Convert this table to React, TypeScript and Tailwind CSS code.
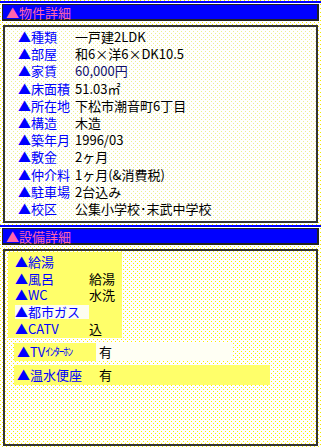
import React from "react";

const font = { fontFamily: '"Noto Sans CJK JP", "Noto Sans", sans-serif' };

// dotted paper backgrounds
const pageDots =
  "bg-white bg-[radial-gradient(circle_at_0.5px_0.5px,#f5e800_0.6px,transparent_0.75px),radial-gradient(circle_at_2.5px_2.5px,#f5e800_0.6px,transparent_0.75px)] bg-[length:4px_4px]";
const faintDots =
  "bg-white bg-[radial-gradient(circle_at_0.5px_0.5px,#eeee90_0.6px,transparent_0.75px),radial-gradient(circle_at_2.5px_2.5px,#eeee90_0.6px,transparent_0.75px)] bg-[length:4px_4px]";
const yellowDots =
  "bg-white bg-[radial-gradient(circle_at_0.5px_0.5px,#ffee00_0.6px,transparent_0.75px),radial-gradient(circle_at_2.5px_2.5px,#ffee00_0.6px,transparent_0.75px)] bg-[length:4px_4px]";
const highlight = "bg-[#ffff6a]";

function Header({ title }: { title: string }) {
  return (
    <div className="mx-[2px] h-[17px] bg-[#0000ff] border border-[#222] border-r-2 border-b-2 flex items-center pl-[3px]">
      <span className="text-[13px] leading-none text-[#ff66aa]">▲{title}</span>
    </div>
  );
}

const details: [string, string, string?][] = [
  ["種類", "一戸建2LDK"],
  ["部屋", "和6×洋6×DK10.5"],
  ["家賃", "60,000円", "#101070"],
  ["床面積", "51.03㎡"],
  ["所在地", "下松市潮音町6丁目"],
  ["構造", "木造"],
  ["築年月", "1996/03"],
  ["敷金", "2ヶ月"],
  ["仲介料", "1ヶ月(&消費税)"],
  ["駐車場", "2台込み"],
  ["校区", "公集小学校･末武中学校"],
];

const equip: [string, string, boolean?][] = [
  ["給湯", ""],
  ["風呂", "給湯"],
  ["WC", "水洗"],
  ["都市ガス", "", true],
  ["CATV", "込"],
];

export default function App() {
  return (
    <div className={`w-[321px] h-[448px] overflow-hidden ${pageDots}`} style={font}>
      <div className="h-[2px] bg-[#0000ff] mt-[1px]" />
      <div className="pt-[1px]">
        <Header title="物件詳細" />
      </div>
      <div className={`mx-[3px] mt-[4px] h-[198px] border-2 border-[#333] ${faintDots} pl-[13px] pt-[1px]`}>
        {details.map(([k, v, c]) => (
          <div key={k} className="flex items-center h-[17.2px] text-[13px] leading-none">
            <span className="w-[57px] shrink-0 text-[#0000ff] whitespace-nowrap">▲{k}</span>
            <span className="whitespace-nowrap" style={{ color: c ?? "#000" }}>
              {v}
            </span>
          </div>
        ))}
      </div>
      <div className="h-[2px] bg-[#0000ff] mt-[2px]" />
      <div className="pt-[1px]">
        <Header title="設備詳細" />
      </div>
      <div className={`mx-[3px] mt-[4px] h-[197px] border-2 border-[#333] ${yellowDots} pl-[3px] pt-[1px]`}>
        <div className={`w-[114px] ${highlight} pt-[2px] pb-[1px]`}>
          {equip.map(([k, v, light]) => (
            <div key={k} className="flex items-center h-[16.6px] text-[13px] leading-[14px]">
              <span
                className={`ml-[7px] w-[74px] shrink-0 text-[#0000ff] whitespace-nowrap ${light ? "bg-[#fdfdf0]" : ""}`}
              >
                ▲{k}
              </span>
              <span className="whitespace-nowrap text-black">{v}</span>
            </div>
          ))}
        </div>
        <div className="mt-[5px] ml-[6px] flex items-center h-[18px] w-[219px] text-[13px] leading-none">
          <span className={`h-full flex items-center w-[82px] shrink-0 ${highlight} pl-[3px] text-[#0000ff] whitespace-nowrap`}>
            <span>▲TV</span>
            <span className="text-[11px] tracking-[-1px]">ｲﾝﾀｰﾎﾝ</span>
          </span>
          <span className="h-full flex-1 flex items-center bg-[#fffff4] pl-[3px] text-black">有</span>
        </div>
        <div className={`mt-[4px] ml-[6px] flex items-center h-[20px] w-[256px] ${highlight} text-[13px] leading-none`}>
          <span className="w-[82px] shrink-0 pl-[3px] text-[#0000ff] whitespace-nowrap">▲温水便座</span>
          <span className="pl-[3px] text-black">有</span>
        </div>
      </div>
    </div>
  );
}
